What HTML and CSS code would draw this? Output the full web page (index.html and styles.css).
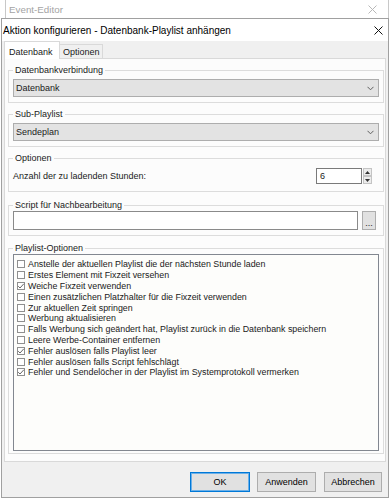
FILE: index.html
```html
<!DOCTYPE html>
<html lang="de">
<head>
<meta charset="utf-8">
<title>Aktion konfigurieren</title>
<link rel="stylesheet" href="styles.css">
</head>
<body>
<div class="behind">
  <span class="behind-title">Event-Editor</span>
  <svg class="x-icon" width="9" height="9" viewBox="0 0 9 9"><path d="M0.5 0.5L8.5 8.5M8.5 0.5L0.5 8.5" stroke="#b8b8b8" stroke-width="1" fill="none"/></svg>
</div>
<div class="dialog">
  <div class="titlebar">
    <span class="title">Aktion konfigurieren - Datenbank-Playlist anhängen</span>
    <svg class="x-icon" width="9" height="9" viewBox="0 0 9 9"><path d="M0.5 0.5L8.5 8.5M8.5 0.5L0.5 8.5" stroke="#111" stroke-width="1" fill="none"/></svg>
  </div>
  <div class="body">
    <div class="tabs">
      <div class="tab active">Datenbank</div>
      <div class="tab">Optionen</div>
    </div>
    <div class="panel">
      <fieldset class="group g1">
        <legend>Datenbankverbindung</legend>
        <div class="combo"><span>Datenbank</span><svg class="chev" width="7" height="5" viewBox="0 0 7 5"><path d="M0.5 0.8L3.5 3.8L6.5 0.8" stroke="#606060" stroke-width="1" fill="none"/></svg></div>
      </fieldset>
      <fieldset class="group g2">
        <legend>Sub-Playlist</legend>
        <div class="combo"><span>Sendeplan</span><svg class="chev" width="7" height="5" viewBox="0 0 7 5"><path d="M0.5 0.8L3.5 3.8L6.5 0.8" stroke="#606060" stroke-width="1" fill="none"/></svg></div>
      </fieldset>
      <fieldset class="group g3">
        <legend>Optionen</legend>
        <div class="row">
          <span class="label">Anzahl der zu ladenden Stunden:</span>
          <div class="spin">
            <div class="spin-input">6</div>
            <div class="spin-btns">
              <div class="spin-btn"><svg width="5" height="3" viewBox="0 0 5 3"><path d="M0 3L2.5 0L5 3Z" fill="#333"/></svg></div>
              <div class="spin-btn"><svg width="5" height="3" viewBox="0 0 5 3"><path d="M0 0L2.5 3L5 0Z" fill="#333"/></svg></div>
            </div>
          </div>
        </div>
      </fieldset>
      <fieldset class="group g4">
        <legend>Script für Nachbearbeitung</legend>
        <div class="row">
          <div class="textbox"></div>
          <div class="dots">...</div>
        </div>
      </fieldset>
      <fieldset class="group g5">
        <legend>Playlist-Optionen</legend>
        <div class="list">
          <div class="item"><span class="cb"></span>Anstelle der aktuellen Playlist die der nächsten Stunde laden</div>
          <div class="item"><span class="cb"></span>Erstes Element mit Fixzeit versehen</div>
          <div class="item"><span class="cb checked"><svg width="8" height="8" viewBox="0 0 8 8"><path d="M1.2 4.2L3 6L6.8 1.8" stroke="#555" stroke-width="0.9" fill="none"/></svg></span>Weiche Fixzeit verwenden</div>
          <div class="item"><span class="cb"></span>Einen zusätzlichen Platzhalter für die Fixzeit verwenden</div>
          <div class="item"><span class="cb"></span>Zur aktuellen Zeit springen</div>
          <div class="item"><span class="cb"></span>Werbung aktualisieren</div>
          <div class="item"><span class="cb"></span>Falls Werbung sich geändert hat, Playlist zurück in die Datenbank speichern</div>
          <div class="item"><span class="cb"></span>Leere Werbe-Container entfernen</div>
          <div class="item"><span class="cb checked"><svg width="8" height="8" viewBox="0 0 8 8"><path d="M1.2 4.2L3 6L6.8 1.8" stroke="#555" stroke-width="0.9" fill="none"/></svg></span>Fehler auslösen falls Playlist leer</div>
          <div class="item"><span class="cb"></span>Fehler auslösen falls Script fehlschlägt</div>
          <div class="item"><span class="cb checked"><svg width="8" height="8" viewBox="0 0 8 8"><path d="M1.2 4.2L3 6L6.8 1.8" stroke="#555" stroke-width="0.9" fill="none"/></svg></span>Fehler und Sendelöcher in der Playlist im Systemprotokoll vermerken</div>
        </div>
      </fieldset>
    </div>
    <div class="buttons">
      <div class="btn ok">OK</div>
      <div class="btn apply">Anwenden</div>
      <div class="btn cancel">Abbrechen</div>
    </div>
  </div>
</div>
</body>
</html>
```
FILE: styles.css
```css
* { box-sizing: border-box; }
html, body { margin: 0; padding: 0; }
body {
  width: 390px;
  height: 500px;
  overflow: hidden;
  background: #ffffff;
  font-family: "Liberation Sans", Arial, sans-serif;
  font-size: 9px;
  color: #1a1a1a;
}

.behind {
  margin-left: 5px;
  width: 384px;
  height: 18px;
  border-left: 1px solid #c8c8c8;
  border-right: 1px solid #c8c8c8;
  display: flex;
  align-items: center;
  justify-content: space-between;
  padding: 0 11px 0 3px;
  font-size: 9.8px;
  color: #a4a4a4;
}
.x-icon { display: block; }

.dialog {
  margin-left: 1px;
  width: 388px;
  height: 480px;
  border: 1px solid #a0a0a0;
  background: #f0f0f0;
  display: flex;
  flex-direction: column;
}
.titlebar {
  height: 22px;
  background: #ffffff;
  display: flex;
  align-items: center;
  justify-content: space-between;
  padding: 0 5px 0 1px;
  flex: none;
}
.title { font-size: 10px; color: #000; }

.body {
  padding: 0 2px 0 2px;
  display: flex;
  flex-direction: column;
}
.tabs {
  height: 17px;
  display: flex;
  align-items: flex-end;
}
.tab {
  height: 14px;
  border: 1px solid #d9d9d9;
  border-bottom: none;
  background: #f0f0f0;
  padding: 1px 3px 0;
  display: flex;
  align-items: center;
  margin-left: -1px;
  width: 44px;
}
.tab.active {
  height: 18px;
  margin-bottom: -1px;
  margin-left: 0;
  width: 56px;
  background: #ffffff;
  padding: 2px 0 0 4px;
  position: relative;
  z-index: 1;
}

.panel {
  height: 404px;
  border: 1px solid #d9d9d9;
  background: #fcfcfc;
  padding: 5px 1px 0 3px;
  display: flex;
  flex-direction: column;
}
.group {
  margin: 0;
  border: 1px solid #dcdcdc;
  padding: 3px 4px 5px;
  min-width: 0;
}
.group legend {
  padding: 0 2px;
  line-height: 12px;
  height: 12px;
}
.g2 { margin-top: 5px; }
.g3 { margin-top: 5px; padding: 4px 4px 7px; }
.g4 { margin-top: 7px; padding: 0 4px 5px; }
.g5 { margin-top: 6px; padding: 0 4px 2px; }

.combo {
  height: 18px;
  background: #e3e3e3;
  border: 1px solid #adadad;
  display: flex;
  align-items: center;
  justify-content: space-between;
  padding: 0 4px 0 2px;
}

.row {
  display: flex;
  align-items: center;
}
.g3 .row { height: 16px; justify-content: space-between; }
.spin {
  display: flex;
  margin-right: 7px;
  height: 16px;
}
.spin-input {
  width: 46px;
  height: 16px;
  background: #fff;
  border: 1px solid #7a7a7a;
  padding-left: 3px;
  display: flex;
  align-items: center;
}
.spin-btns {
  width: 9px;
  display: flex;
  flex-direction: column;
  margin-left: 1px;
}
.spin-btn {
  flex: 1;
  border: 1px solid #c4c4c4;
  background: #ececec;
  display: flex;
  align-items: center;
  justify-content: center;
}
.spin-btn svg { display: block; }

.g4 .row { height: 19px; }
.textbox {
  flex: 1;
  height: 19px;
  background: #fff;
  border: 1px solid #8a8a8a;
}
.dots {
  width: 14px;
  height: 19px;
  margin-left: 4px;
  margin-right: 3px;
  background: #e1e1e1;
  border: 1px solid #adadad;
  display: flex;
  align-items: flex-end;
  justify-content: center;
  line-height: 12px;
  font-size: 9px;
}

.list {
  height: 197px;
  background: #fdfdfb;
  border: 1px solid #828790;
  padding: 4px 0 0 3px;
  font-size: 8.85px;
}
.item {
  height: 10.8px;
  display: flex;
  align-items: center;
  white-space: nowrap;
}
.cb {
  width: 8px;
  height: 8px;
  border: 1px solid #8f8f8f;
  background: #fff;
  margin-right: 3px;
  flex: none;
  position: relative;
}
.cb svg { display: block; margin: -1px 0 0 -1px; }

.buttons {
  margin-top: 10px;
  height: 20px;
  display: flex;
  justify-content: flex-end;
  padding-right: 4px;
}
.btn {
  height: 20px;
  background: #e1e1e1;
  border: 1px solid #adadad;
  display: flex;
  align-items: center;
  justify-content: center;
  color: #000;
}
.ok { width: 60px; border: 1px solid #0078d7; box-shadow: inset 0 0 0 1px #6cb0e8; }
.apply { width: 59px; margin-left: 7px; }
.cancel { width: 58px; margin-left: 8px; }
```
